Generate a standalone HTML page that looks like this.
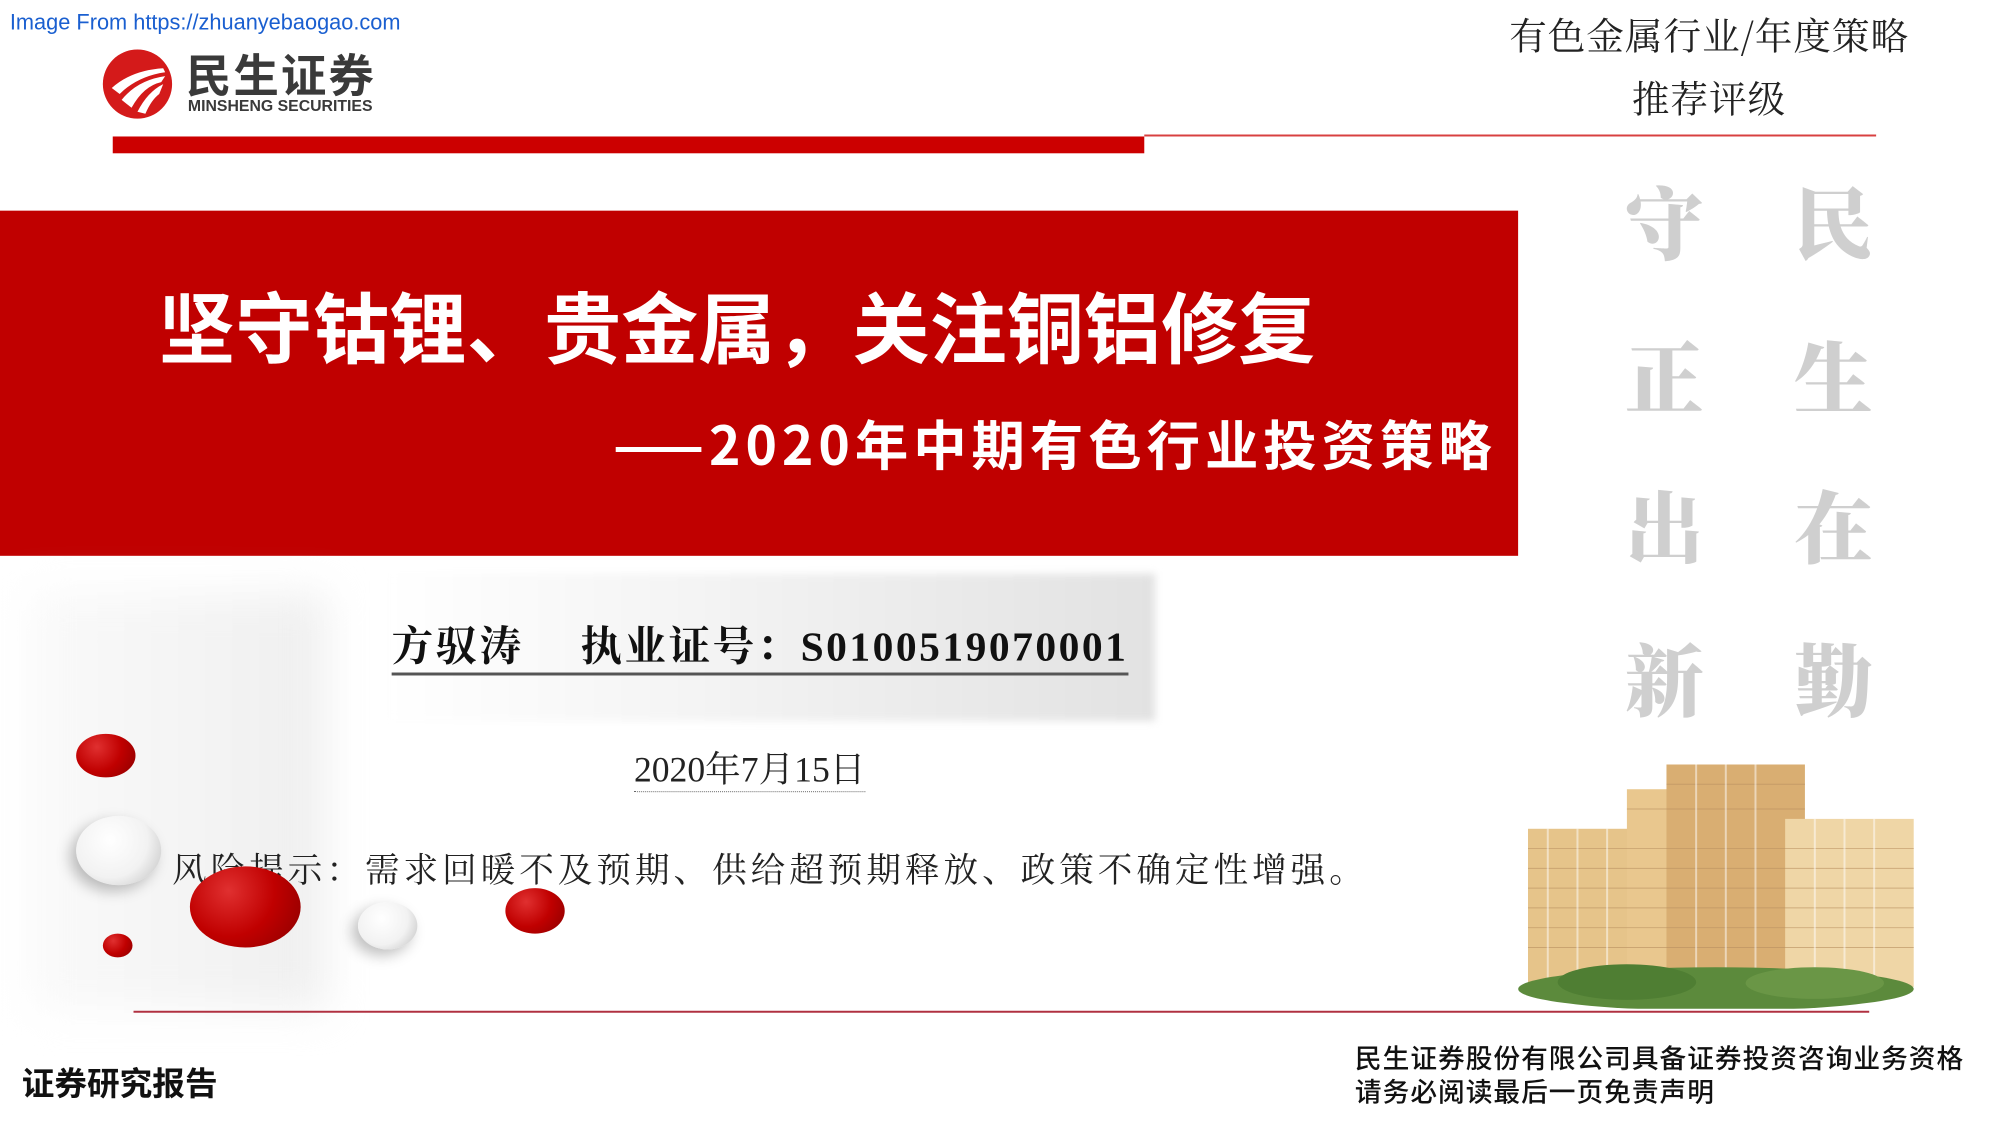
<!DOCTYPE html>
<html><head><meta charset="utf-8"><style>
*{margin:0;padding:0;box-sizing:border-box}
body{width:2000px;height:1125px;position:relative;overflow:hidden;background:#fff;font-family:"Liberation Sans","Noto Sans CJK SC",sans-serif}
#w{position:absolute;left:0;top:0;width:2000px;height:1125px;transform:scale(0.989);transform-origin:0 0}
.a{position:absolute;white-space:nowrap}
.wm{position:absolute;font-family:"Noto Serif CJK SC",serif;font-weight:900;font-size:80px;color:#cfcfcf;line-height:1}
.c{position:absolute;border-radius:50%}
.r{background:radial-gradient(circle at 35% 30%,#e03030,#c00000 50%,#8a0000)}
.w{background:radial-gradient(circle at 40% 35%,#fff,#f2f2f2 55%,#bdbdbd);box-shadow:-6px 6px 14px rgba(0,0,0,.25)}
</style></head><body><div id="w">
<div class="a" style="left:10px;top:10px;font-size:22px;color:#1a5fd0">Image From https://zhuanyebaogao.com</div>
<svg class="a" style="left:103px;top:49px" width="72" height="72" viewBox="0 0 72 72"><circle cx="36" cy="36" r="35" fill="#d41a1a"/><path d="M10 40 Q30 22 62 20 L64 24 Q36 28 18 46Z M20 52 Q36 32 64 28 L60 34 Q42 38 30 60Z M36 64 Q46 44 62 36 L58 46 Q50 52 44 66Z" fill="#fff"/></svg>
<div class="a" style="left:188px;top:50px;font-size:46px;font-weight:bold;color:#3a3a3a;font-family:'Noto Sans CJK SC',sans-serif;letter-spacing:2px;line-height:48px">民生证券</div>
<div class="a" style="left:190px;top:100px;font-size:16px;font-weight:bold;color:#3a3a3a;line-height:16px">MINSHENG SECURITIES</div>
<div class="a" style="left:114px;top:138px;width:1043px;height:17px;background:#cc0000"></div>
<div class="a" style="left:1157px;top:136px;width:740px;height:2px;background:#d84040"></div>
<div class="a" style="left:1526px;top:6px;font-size:38px;color:#222;font-family:'Noto Serif CJK SC',serif;letter-spacing:1px">有色金属行业/年度策略</div>
<div class="a" style="left:1650px;top:70px;font-size:38px;color:#222;font-family:'Noto Serif CJK SC',serif;letter-spacing:1px">推荐评级</div>
<div class="a" style="left:0;top:213px;width:1535px;height:349px;background:#c00000"></div>
<div class="a" style="left:160px;top:282px;font-size:78px;font-weight:bold;color:#fff;font-family:'Noto Sans CJK SC',sans-serif;line-height:92px">坚守钴锂、贵金属，关注铜铝修复</div>
<div class="a" style="left:620px;top:414px;font-size:54px;font-weight:bold;color:#fff;font-family:'Noto Sans CJK SC',sans-serif;line-height:66px;letter-spacing:5px">——2020年中期有色行业投资策略</div>
<div class="wm" style="left:1643px;top:182px">守</div><div class="wm" style="left:1814px;top:182px">民</div>
<div class="wm" style="left:1643px;top:338px">正</div><div class="wm" style="left:1814px;top:338px">生</div>
<div class="wm" style="left:1643px;top:489px">出</div><div class="wm" style="left:1814px;top:489px">在</div>
<div class="wm" style="left:1643px;top:644px">新</div><div class="wm" style="left:1814px;top:644px">勤</div>
<div class="a" style="left:30px;top:600px;width:300px;height:420px;background:linear-gradient(90deg,#fafafa,#efefef);filter:blur(20px)"></div>
<div class="a" style="left:387px;top:580px;width:781px;height:149px;background:linear-gradient(90deg,#fff 0%,#f4f4f4 40%,#e2e2e2 100%);filter:blur(4px)"></div>
<div class="a" style="left:396px;top:630px;font-size:42px;font-weight:bold;color:#111;font-family:'Liberation Serif','Noto Serif CJK SC',serif;border-bottom:3px solid #555;line-height:50px;letter-spacing:2.5px">方驭涛　 执业证号：S0100519070001</div>
<div class="a" style="left:641px;top:756px;font-size:36px;color:#222;font-family:'Liberation Serif','Noto Serif CJK SC',serif;border-bottom:1px dotted #666;line-height:44px">2020年7月15日</div>
<div class="a" style="left:174px;top:860px;font-size:35px;color:#222;font-family:'Liberation Serif','Noto Serif CJK SC',serif;line-height:42px;letter-spacing:4px">风险提示：需求回暖不及预期、供给超预期释放、政策不确定性增强。</div>
<div class="c r" style="left:77px;top:742px;width:60px;height:44px"></div>
<div class="c w" style="left:77px;top:825px;width:86px;height:70px"></div>
<div class="c r" style="left:192px;top:876px;width:112px;height:82px"></div>
<div class="c w" style="left:362px;top:912px;width:60px;height:48px"></div>
<div class="c r" style="left:511px;top:898px;width:60px;height:46px"></div>
<div class="c r" style="left:104px;top:944px;width:30px;height:24px"></div>
<svg class="a" style="left:1535px;top:768px" width="405" height="252" viewBox="0 0 405 252">
<rect x="10" y="70" width="120" height="160" fill="#e6c48a"/><rect x="110" y="30" width="160" height="200" fill="#e9c78e"/><rect x="150" y="5" width="140" height="225" fill="#d9ae72"/><rect x="270" y="60" width="130" height="170" fill="#efd6a6"/>
<g stroke="#b89060" stroke-width="1" opacity=".6"><path d="M10 90H400M10 110H400M10 130H400M10 150H400M10 170H400M10 190H400M110 50H290M150 25H290"/></g>
<g stroke="#fff" stroke-width="2" opacity=".5"><path d="M30 70V230M60 70V230M90 70V230M180 5V230M210 5V230M240 5V230M300 60V230M330 60V230M360 60V230"/></g>
<ellipse cx="200" cy="232" rx="200" ry="22" fill="#5c8a3c"/><ellipse cx="110" cy="225" rx="70" ry="18" fill="#4f7e33"/><ellipse cx="300" cy="226" rx="70" ry="16" fill="#6a9646"/>
</svg>
<div class="a" style="left:135px;top:1022px;width:1755px;height:2px;background:#b03040"></div>
<div class="a" style="left:22px;top:1072px;font-size:33px;font-weight:bold;color:#111;font-family:'Noto Sans CJK SC',sans-serif;line-height:42px">证券研究报告</div>
<div class="a" style="left:1370px;top:1052px;font-size:27px;color:#111;font-family:'Noto Sans CJK SC',sans-serif;line-height:34px;font-weight:500;letter-spacing:1px">民生证券股份有限公司具备证券投资咨询业务资格<br>请务必阅读最后一页免责声明</div>
</div></body></html>
